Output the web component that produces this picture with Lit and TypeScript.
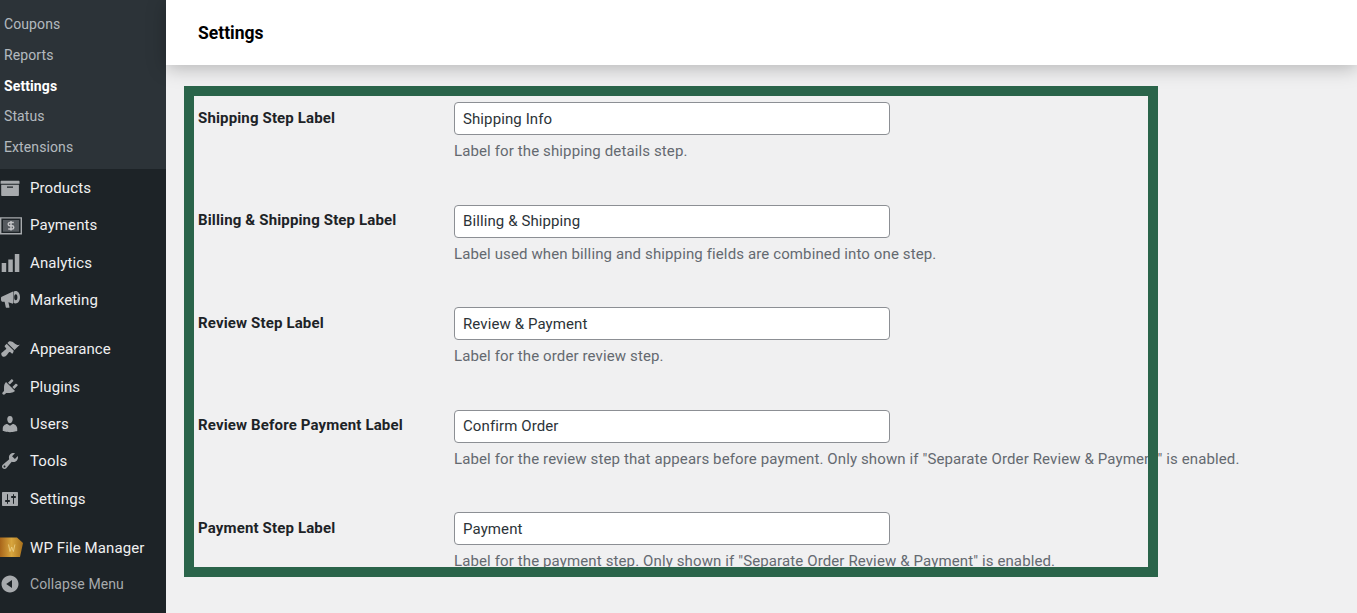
import { LitElement, html, css, svg } from "lit";
import { customElement } from "lit/decorators.js";

const I: Record<string, any> = {
  products: svg`<path d="M19.500 3.800v2H.6v-2c0-.55.45-1 1-1h17c.55 0 .9.45.9 1zM1.200 6.800h17.700v10.300c0 .55-.45 1-1 1H2.200c-.55 0-1-.45-1-1V6.800zm11.800 3V8.600H7v1.200h6z"/>`,
  payments: svg`<path fill-rule="evenodd" d="M0 2.200h22v17.300H0zm1.400 1.400v14.500h19.200V3.600z"/><rect x="3" y="5" width="16" height="11.700" fill="#555a5f"/><path d="M13.800 7.500h-3.900a1.650 1.650 0 0 0 0 3.300h2.200a1.650 1.650 0 0 1 0 3.300H8.200M11 6v9.600" fill="none" stroke="#c3c4c7" stroke-width="1.500"/>`,
  analytics: svg`<path d="M19.300 19V1h-4.500v18h4.500zm-6.500 0V6.500H8.300V19h4.500zm-6.600 0V10H1.700v9h4.500z"/>`,
  marketing: svg`<path d="M1 8c0-.8.5-1.400 1.200-1.600L13 1.400v12.400l-4.600-1.500 1 4.600c.1.5-.2.9-.7.9H6.600c-.4 0-.7-.2-.8-.6L4.600 11.800H3c-1.200 0-2-.9-2-2.100z"/><path fill-rule="evenodd" d="M15.500 1c2.600 0 4.500 2.700 4.500 6.200s-1.900 6.200-4.500 6.200c-.8 0-1.500-.3-2-.7V1.700c.5-.4 1.200-.7 2-.7zm.3 3.200c-1 0-1.600 1.300-1.600 3s.6 3 1.600 3 1.600-1.300 1.600-3-.6-3-1.600-3z"/>`,
  appearance: svg`<path d="M14.48 11.06L7.41 3.99l1.5-1.5c.5-.56 2.3-.47 3.51.32 1.21.8 1.43 1.28 2.91 2.1 1.18.64 2.45 1.26 4.45.85zm-.71.71L6.7 4.7 4.93 6.470c-.39.39-.39 1.020 0 1.410l1.060 1.060c.39.39.39 1.030 0 1.420-.6.6-1.430 1.110-2.210 1.690-.35.26-.7.53-1.010.84C1.430 13.230.95 14.300 1.400 15.800c.3 1 .9 1.800 1.800 1.900 1.300.2 2.300-.3 3.200-1.200.3-.3.6-.7.9-1.100.6-.8 1.100-1.600 1.700-2.200.4-.4 1-.4 1.400 0l1.100 1.100c.4.4 1 .4 1.400 0z"/>`,
  plugins: svg`<path d="M13.110 4.360L9.870 7.600 8 5.730l3.240-3.240c.35-.34 1.050-.2 1.560.32.52.51.66 1.210.31 1.550zm-8 1.770l.91-1.120 9.010 9.010-1.190.84c-.71.71-2.630 1.160-3.820 1.160H6.140L4.900 17.260c-.59.59-1.540.59-2.120 0-.59-.58-.59-1.530 0-2.120l1.240-1.240v-3.880c0-1.130.4-3.190 1.090-3.890zm7.260 3.970l3.240-3.240c.34-.35 1.040-.21 1.550.31.52.51.66 1.210.31 1.550l-3.240 3.250z"/>`,
  users: svg`<path d="M10 9.250c-2.270 0-2.730-3.440-2.730-3.440C7 4.020 7.820 2 9.970 2c2.160 0 2.980 2.020 2.710 3.810 0 0-.41 3.440-2.680 3.440zm0 2.570L12.720 10c2.390 0 4.520 2.330 4.520 4.530v2.490s-3.650 1.130-7.240 1.130c-3.650 0-7.240-1.130-7.240-1.130v-2.490c0-2.250 1.940-4.480 4.470-4.480z"/>`,
  tools: svg`<path d="M16.680 9.770c-1.340 1.340-3.300 1.670-4.950.99l-5.410 6.520c-.99.99-2.590.99-3.580 0s-.99-2.590 0-3.570l6.520-5.420c-.68-1.650-.35-3.610.99-4.950 1.280-1.280 3.120-1.620 4.720-1.060l-2.890 2.890 2.820 2.820 2.860-2.870c.53 1.580.18 3.390-1.080 4.650zM3.810 16.210c.4.39 1.040.39 1.430 0 .4-.4.4-1.040 0-1.430-.39-.4-1.030-.4-1.430 0-.39.39-.39 1.030 0 1.430z"/>`,
  settings: svg`<path d="M18 16V4c0-.55-.45-1-1-1H3c-.55 0-1 .45-1 1v12c0 .55.45 1 1 1h14c.55 0 1-.45 1-1zM8 11h1c.55 0 1 .45 1 1s-.45 1-1 1H8v1.500c0 .28-.22.5-.5.5s-.5-.22-.5-.5V13H6c-.55 0-1-.45-1-1s.45-1 1-1h1V5.500c0-.28.22-.5.5-.5s.5.22.5.5V11zm5-2h-1c-.55 0-1-.45-1-1s.45-1 1-1h1V5.500c0-.28.22-.5.5-.5s.5.22.5.5V7h1c.55 0 1 .45 1 1s-.45 1-1 1h-1v5.500c0 .28-.22.5-.5.5s-.5-.22-.5-.5V9z" fill-rule="evenodd"/>`,
  collapse: svg`<path d="M10 1.500c4.700 0 8.500 3.800 8.500 8.500s-3.800 8.500-8.500 8.500S1.500 14.700 1.500 10 5.300 1.500 10 1.500zm2 12.400V6.100L6.200 10z" fill-rule="evenodd"/>`,
  fm: svg`<defs><linearGradient id="fmg" x1="0" x2="1" y1="0" y2="0"><stop offset="0" stop-color="#a8651a"/><stop offset=".5" stop-color="#d8a63e"/><stop offset="1" stop-color="#a8701c"/></linearGradient></defs><path fill="url(#fmg)" d="M0-.5h17l6 5.500-3 14H0z"/><path d="M8.500 6.500l1.500 7 1.700-4.500 1.700 4.500 1.500-7" fill="none" stroke="#edd38a" stroke-width="1" opacity=".8"/>`,
};

const sub = [
  ["Coupons", false],
  ["Reports", false],
  ["Settings", true],
  ["Status", false],
  ["Extensions", false],
] as const;

const groups: [string, string][][] = [
  [["products", "Products"], ["payments", "Payments"], ["analytics", "Analytics"], ["marketing", "Marketing"]],
  [["appearance", "Appearance"], ["plugins", "Plugins"], ["users", "Users"], ["tools", "Tools"], ["settings", "Settings"]],
  [["fm", "WP File Manager"]],
];

const rows = [
  ["Shipping Step Label", "Shipping Info", "Label for the shipping details step."],
  ["Billing & Shipping Step Label", "Billing & Shipping", "Label used when billing and shipping fields are combined into one step."],
  ["Review Step Label", "Review & Payment", "Label for the order review step."],
  ["Review Before Payment Label", "Confirm Order", 'Label for the review step that appears before payment. Only shown if "Separate Order Review & Payment" is enabled.'],
  ["Payment Step Label", "Payment", 'Label for the payment step. Only shown if "Separate Order Review & Payment" is enabled.'],
];

@customElement("app-root")
export class AppRoot extends LitElement {
  static styles = css`
    :host {
      display: flex;
      width: 100%;
      height: 613px;
      overflow: hidden;
      position: relative;
      background: #f0f0f1;
      font-family: Roboto, "Liberation Sans", sans-serif;
      font-size: 14px;
    }
    .side {
      width: 166px;
      flex: none;
      background: #1d2327;
      display: flex;
      flex-direction: column;
    }
    .sub {
      background: #2c3338;
      height: 169.300px;
      flex: none;
      padding-top: 9px;
      box-sizing: border-box;
    }
    .sub div {
      height: 30.750px;
      line-height: 30.750px;
      padding-left: 4px;
      color: rgba(240, 246, 252, 0.7);
      font-size: 14px;
      letter-spacing: 0.1px;
    }
    .sub div.on {
      color: #fff;
      font-weight: 700;
    }
    .group {
      flex: none;
      margin-bottom: 12px;
    }
    .group:nth-of-type(2) {
      margin-bottom: 11.600px;
    }
    .group:nth-of-type(4) {
      margin-bottom: 0;
    }
    .item {
      height: 37.400px;
      display: flex;
      align-items: center;
      color: #f0f0f1;
      font-size: 15px;
      letter-spacing: 0.1px;
    }
    .item svg {
      width: 20px;
      height: 20px;
      flex: none;
      fill: #a7aaad;
      margin-right: 10px;
      overflow: visible;
    }
    .collapse {
      color: #a7aaad;
      font-size: 14px;
      height: 34px;
      flex: none;
    }
    .main {
      flex: 1;
      min-width: 0;
    }
    .head {
      height: 65px;
      background: #fff;
      box-shadow: 0 3px 18px rgba(0, 0, 0, 0.26);
      display: flex;
      align-items: center;
      padding-left: 32px;
      font-size: 17.500px;
      font-weight: 700;
      color: #000;
    }
    .form {
      padding: 37px 0 0 32px;
    }
    .row {
      height: 102.600px;
      display: grid;
      grid-template-columns: 256px 1fr;
    }
    .row label {
      font-weight: 700;
      color: #1d2327;
      line-height: 20px;
      padding-top: 5.700px;
      font-size: 15px;
      letter-spacing: 0.15px;
    }
    .row input {
      display: block;
      box-sizing: border-box;
      width: 436px;
      height: 33px;
      padding: 0 8px;
      border: 1px solid #8c8f94;
      border-radius: 4px;
      background: #fff;
      font: 15px Roboto, sans-serif;
      letter-spacing: 0.1px;
      color: #2c3338;
      outline: none;
    }
    .row p {
      margin: 6px 0 0;
      line-height: 21px;
      color: #646970;
      font-size: 15px;
      letter-spacing: 0.12px;
      white-space: nowrap;
    }
    .frame {
      position: absolute;
      left: 184px;
      top: 86px;
      width: 974px;
      height: 491px;
      box-sizing: border-box;
      border: 10px solid #2a644a;
      pointer-events: none;
    }
  `;

  render() {
    return html`
      <nav class="side">
        <div class="sub">
          ${sub.map(([t, on]) => html`<div class=${on ? "on" : ""}>${t}</div>`)}
        </div>
        ${groups.map(
          (g) => html`<div class="group">
            ${g.map(
              ([ic, t]) => html`<div class="item">
                <svg viewBox="0 0 20 20">${I[ic]}</svg><span>${t}</span>
              </div>`
            )}
          </div>`
        )}
        <div class="item collapse">
          <svg viewBox="0 0 20 20">${I.collapse}</svg><span>Collapse Menu</span>
        </div>
      </nav>
      <main class="main">
        <header class="head">Settings</header>
        <section class="form">
          ${rows.map(
            ([l, v, d]) => html`<div class="row">
              <label>${l}</label>
              <div>
                <input type="text" .value=${v} />
                <p>${d}</p>
              </div>
            </div>`
          )}
        </section>
      </main>
      <div class="frame"></div>
    `;
  }
}
